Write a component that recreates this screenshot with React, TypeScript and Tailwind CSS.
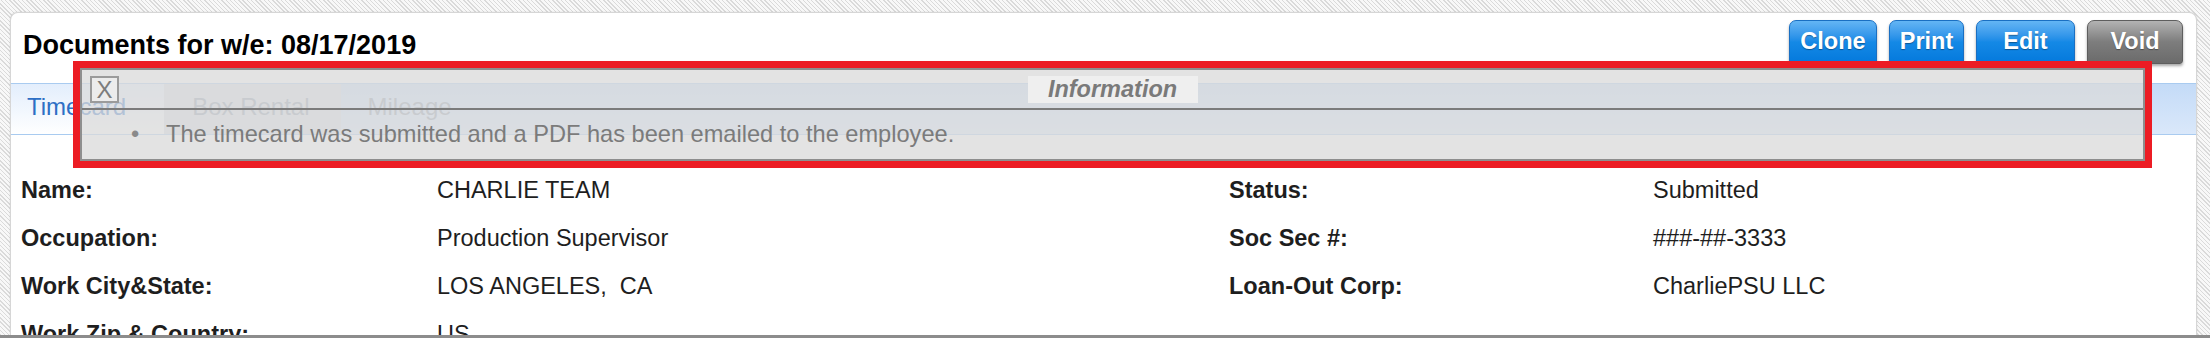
import React from 'react';

const rowsLeft = [
  ['Name:', 'CHARLIE TEAM'],
  ['Occupation:', 'Production Supervisor'],
  ['Work City&State:', 'LOS ANGELES,\u00a0 CA'],
  ['Work Zip & Country:', 'US'],
];

const rowsRight = [
  ['Status:', 'Submitted'],
  ['Soc Sec #:', '###-##-3333'],
  ['Loan-Out Corp:', 'CharliePSU LLC'],
  ['', ''],
];

const ActionButton: React.FC<{ label: string; width: string; gray?: boolean }> = ({ label, width, gray }) => (
  <button
    className={`${width} h-[44px] rounded-t-[7px] rounded-b-[3px] flex items-center justify-center text-white font-bold text-[23.5px] [text-shadow:0_1px_1px_rgba(0,0,0,0.35)] shadow-[0_2px_3px_rgba(0,0,0,0.35)] ${
      gray
        ? 'bg-linear-to-b from-[#b3b3b3] via-[#7d7d7d] to-[#6b6b6b] border border-[#5e5e5e]'
        : 'bg-linear-to-b from-[#63b5f4] via-[#1489e6] to-[#0479dc] border border-[#1a6fc2]'
    }`}
  >
    {label}
  </button>
);

export default function App() {
  return (
    <div className="relative w-[2210px] h-[338px] overflow-hidden flex flex-col font-['Liberation_Sans',Arial,sans-serif] bg-[#f7f7f7]">
      {/* hatched page background */}
      <div className="flex-1 min-h-0 flex pl-[10px] pr-[13px] pt-[12px] bg-[repeating-linear-gradient(45deg,#dadada_0px,#dadada_1px,#f8f8f8_1px,#f8f8f8_3px)] overflow-hidden">
        <div className="flex-1 flex flex-col bg-white border border-[#d6d6d6] border-b-0 rounded-t-[8px] shadow-[0_0_2px_rgba(0,0,0,0.12)] overflow-hidden">
          {/* header */}
          <div className="shrink-0 h-[70px] flex justify-between items-start pl-[12px] pr-[13px]">
            <h1 className="mt-[16px] leading-[32px] text-[27px] font-bold text-black">Documents for w/e: 08/17/2019</h1>
            <div className="mt-[7px] flex gap-[12px]">
              <ActionButton label="Clone" width="w-[88px]" />
              <ActionButton label="Print" width="w-[75px]" />
              <ActionButton label="Edit" width="w-[99px]" />
              <ActionButton label="Void" width="w-[96px]" gray />
            </div>
          </div>

          {/* tabs */}
          <div className="shrink-0 h-[52px] flex items-stretch border-t border-b border-[#a9cbf0] bg-linear-to-b from-[#c4dbf7] to-[#dae8fa] text-[24px]">
            <div className="pl-[16px] pr-[38px] pb-[4px] flex items-center bg-linear-to-b from-[#e3eefc] to-white text-[#2d6fc5]">
              Timecard
            </div>
            <div className="pl-[28px] pr-[31px] pb-[4px] flex items-center bg-[#d6dce3] text-[#8c98a8]">Box Rental</div>
            <div className="px-[27px] pb-[4px] flex items-center text-[#8c98a8]">Mileage</div>
          </div>

          {/* details */}
          <div className="shrink-0 mt-[32px] pl-[10px] grid grid-cols-[416px_792px_424px_1fr] text-[23.5px] text-[#1e1e1e]">
            {rowsLeft.map(([l, v], i) => (
              <React.Fragment key={l}>
                <div className="h-[48px] flex items-center font-bold">{l}</div>
                <div className="h-[48px] flex items-center whitespace-pre">{v}</div>
                <div className="h-[48px] flex items-center font-bold">{rowsRight[i][0]}</div>
                <div className="h-[48px] flex items-center">{rowsRight[i][1]}</div>
              </React.Fragment>
            ))}
          </div>
        </div>
      </div>
      <div className="shrink-0 h-[3px] bg-[#8c8c8c]" />

      {/* information message, highlighted */}
      <div className="absolute left-[73px] top-[61px] w-[2079px] h-[107px] border-[7px] border-[#ec1c24]">
        <div className="h-full border-2 border-[#8e8e8e] bg-[rgba(219,219,219,0.77)] flex flex-col">
          <div className="shrink-0 h-[40px] grid grid-cols-[1fr_auto_1fr] items-start border-b-2 border-[#7b7b7b]">
            <div className="pl-[8px] pt-[6px]">
              <div className="w-[29px] h-[27px] border-2 border-[#9b9b9b] bg-[#ececec] flex items-center justify-center text-[24px] leading-none text-[#7c7c7c]">
                X
              </div>
            </div>
            <div className="mt-[6px] w-[170px] h-[27px] bg-[#efefef] flex items-center justify-center text-[23.5px] font-bold italic text-[#7a7a7a]">
              Information
            </div>
            <div />
          </div>
          <div className="flex-1 flex items-center pl-[49px] text-[23.6px] text-[#7b7b7b]">
            <span className="w-[35px] text-[#8a8a8a]">•</span>
            <span>The timecard was submitted and a PDF has been emailed to the employee.</span>
          </div>
        </div>
      </div>
    </div>
  );
}
